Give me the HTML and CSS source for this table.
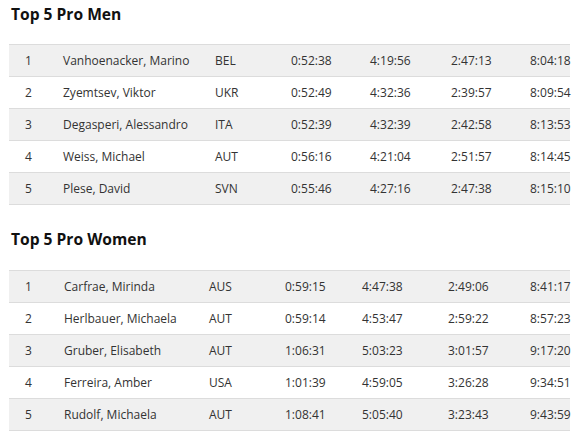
FILE: index.html
```html
<!DOCTYPE html>
<html>
<head>
<meta charset="utf-8">
<link rel="stylesheet" href="styles.css">
</head>
<body>
<section class="block block-men">
  <h2 class="title">Top 5 Pro Men</h2>
  <table class="results">
    <tr><td class="c-rank">1</td><td class="c-name">Vanhoenacker, Marino</td><td class="c-nat">BEL</td><td class="c-t1">0:52:38</td><td class="c-t2">4:19:56</td><td class="c-t3">2:47:13</td><td class="c-t4">8:04:18</td></tr>
    <tr><td class="c-rank">2</td><td class="c-name">Zyemtsev, Viktor</td><td class="c-nat">UKR</td><td class="c-t1">0:52:49</td><td class="c-t2">4:32:36</td><td class="c-t3">2:39:57</td><td class="c-t4">8:09:54</td></tr>
    <tr><td class="c-rank">3</td><td class="c-name">Degasperi, Alessandro</td><td class="c-nat">ITA</td><td class="c-t1">0:52:39</td><td class="c-t2">4:32:39</td><td class="c-t3">2:42:58</td><td class="c-t4">8:13:53</td></tr>
    <tr><td class="c-rank">4</td><td class="c-name">Weiss, Michael</td><td class="c-nat">AUT</td><td class="c-t1">0:56:16</td><td class="c-t2">4:21:04</td><td class="c-t3">2:51:57</td><td class="c-t4">8:14:45</td></tr>
    <tr><td class="c-rank">5</td><td class="c-name">Plese, David</td><td class="c-nat">SVN</td><td class="c-t1">0:55:46</td><td class="c-t2">4:27:16</td><td class="c-t3">2:47:38</td><td class="c-t4">8:15:10</td></tr>
  </table>
</section>
<section class="block block-women">
  <h2 class="title">Top 5 Pro Women</h2>
  <table class="results">
    <tr><td class="c-rank">1</td><td class="c-name">Carfrae, Mirinda</td><td class="c-nat">AUS</td><td class="c-t1">0:59:15</td><td class="c-t2">4:47:38</td><td class="c-t3">2:49:06</td><td class="c-t4">8:41:17</td></tr>
    <tr><td class="c-rank">2</td><td class="c-name">Herlbauer, Michaela</td><td class="c-nat">AUT</td><td class="c-t1">0:59:14</td><td class="c-t2">4:53:47</td><td class="c-t3">2:59:22</td><td class="c-t4">8:57:23</td></tr>
    <tr><td class="c-rank">3</td><td class="c-name">Gruber, Elisabeth</td><td class="c-nat">AUT</td><td class="c-t1">1:06:31</td><td class="c-t2">5:03:23</td><td class="c-t3">3:01:57</td><td class="c-t4">9:17:20</td></tr>
    <tr><td class="c-rank">4</td><td class="c-name">Ferreira, Amber</td><td class="c-nat">USA</td><td class="c-t1">1:01:39</td><td class="c-t2">4:59:05</td><td class="c-t3">3:26:28</td><td class="c-t4">9:34:51</td></tr>
    <tr><td class="c-rank">5</td><td class="c-name">Rudolf, Michaela</td><td class="c-nat">AUT</td><td class="c-t1">1:08:41</td><td class="c-t2">5:05:40</td><td class="c-t3">3:23:43</td><td class="c-t4">9:43:59</td></tr>
  </table>
</section>
</body>
</html>
```
FILE: styles.css
```css
html, body {
  margin: 0;
  padding: 0;
  background: #ffffff;
}
body {
  padding: 4px 16px 0 9px;
  font-family: "Open Sans", "Noto Sans", sans-serif;
  color: #333333;
}
.title {
  margin: 0 0 0 2px;
  font-size: 15.6px;
  line-height: 20px;
  font-weight: 700;
  color: #111111;
}
.block-men .title { margin-bottom: 20px; }
.block-women { margin-top: 24px; }
.block-women .title { margin-bottom: 21px; }
.results {
  width: 561px;
  border-collapse: collapse;
  table-layout: fixed;
  font-size: 12px;
}
.results td {
  height: 31px;
  padding: 0 0 0 8px;
  border-top: 1px solid #dcdcdc;
  border-bottom: 1px solid #dcdcdc;
  white-space: nowrap;
  overflow: visible;
  vertical-align: middle;
  line-height: 16px;
}
.results tr:nth-child(odd) td { background: #f0f0f0; }
.results td.c-rank { padding-left: 16px; }
.block-men .c-rank { width: 30px; }
.block-men .c-name { width: 144px; }
.block-men .c-nat { width: 68px; }
.block-men .c-t1 { width: 71px; }
.block-men .c-t2 { width: 73px; }
.block-men .c-t3 { width: 71px; }
.block-women .c-rank { width: 31px; }
.block-women .c-name { width: 137px; }
.block-women .c-nat { width: 68px; }
.block-women .c-t1 { width: 69px; }
.block-women .c-t2 { width: 78px; }
.block-women .c-t3 { width: 74px; }
```
